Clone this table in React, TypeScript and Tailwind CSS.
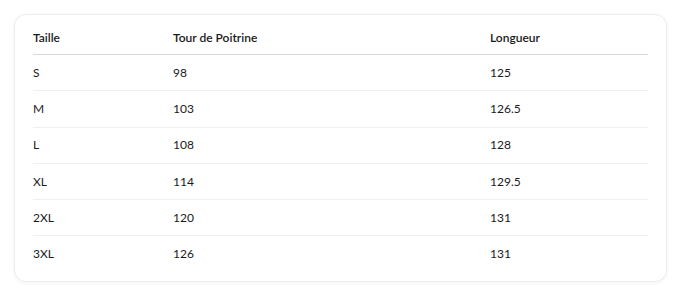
const ROWS = [
    { size: 'S', chest: '98', length: '125' },
    { size: 'M', chest: '103', length: '126.5' },
    { size: 'L', chest: '108', length: '128' },
    { size: 'XL', chest: '114', length: '129.5' },
    { size: '2XL', chest: '120', length: '131' },
    { size: '3XL', chest: '126', length: '131' },
]

const App = () => {
    return (
        <div className="w-[679px] h-[292px] bg-white pt-[14px] pl-[14px] font-['Lato',sans-serif] text-[12px] text-[#1a1a1a]">
            <div className="w-[653px] h-[268px] rounded-[12px] border border-[#ededed] bg-white shadow-[0_1px_4px_rgba(0,0,0,0.05)] px-[18px] pt-[15px]">
                <table className="w-[615px] table-fixed border-collapse">
                    <colgroup>
                        <col className="w-[140px]" />
                        <col className="w-[317px]" />
                        <col className="w-[158px]" />
                    </colgroup>
                    <thead>
                        <tr className="border-b border-[#d9d9d9] text-left">
                            <th className="h-[24px] pb-[8px] font-semibold leading-[16px]">Taille</th>
                            <th className="h-[24px] pb-[8px] font-semibold leading-[16px]">Tour de Poitrine</th>
                            <th className="h-[24px] pb-[8px] font-semibold leading-[16px]">Longueur</th>
                        </tr>
                    </thead>
                    <tbody>
                        {ROWS.map((row, i) => (
                            <tr
                                key={row.size}
                                className={i < ROWS.length - 1 ? 'border-b border-[#f0f0f0]' : ''}
                            >
                                <td className="h-[36.3px] leading-[16px]">{row.size}</td>
                                <td className="h-[36.3px] leading-[16px]">{row.chest}</td>
                                <td className="h-[36.3px] leading-[16px]">{row.length}</td>
                            </tr>
                        ))}
                    </tbody>
                </table>
            </div>
        </div>
    )
}

export default App
